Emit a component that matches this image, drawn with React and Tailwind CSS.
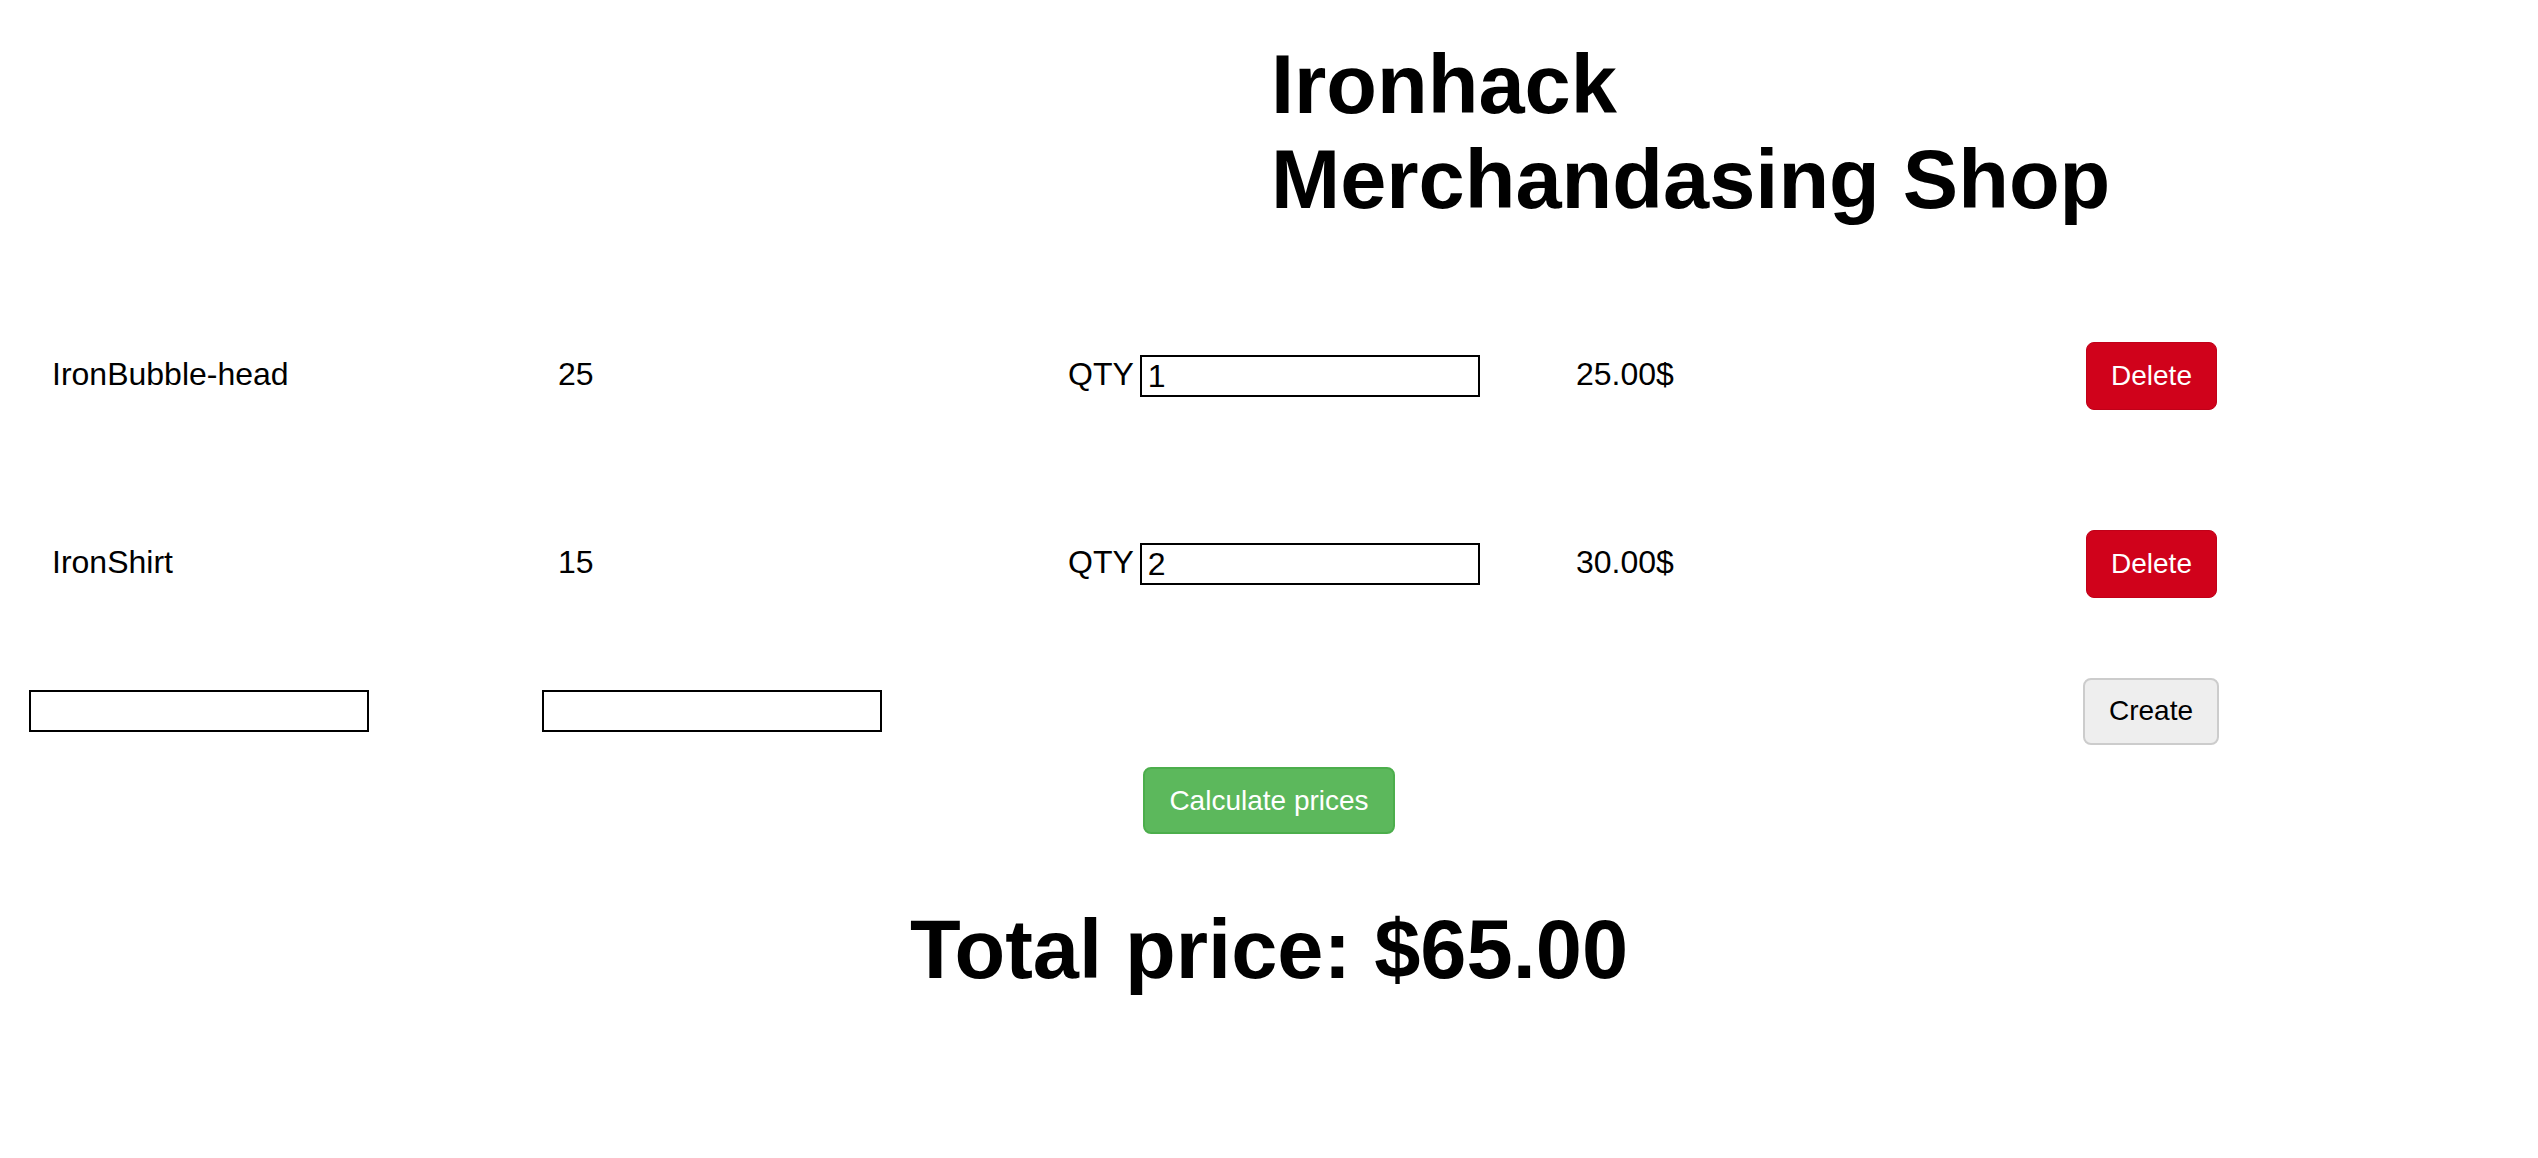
import React, { useState } from 'react';

const initialProducts = [
  { name: 'IronBubble-head', price: 25, qty: '1' },
  { name: 'IronShirt', price: 15, qty: '2' }
];

const App = () => {
  const [products, setProducts] = useState(initialProducts);
  const [newName, setNewName] = useState('');
  const [newPrice, setNewPrice] = useState('');
  const [total, setTotal] = useState(65);

  const updateQty = (index, value) => {
    setProducts(products.map((p, i) => (i === index ? { ...p, qty: value } : p)));
  };

  const remove = (index) => setProducts(products.filter((_, i) => i !== index));

  const create = () => {
    if (!newName) return;
    setProducts([...products, { name: newName, price: Number(newPrice) || 0, qty: '0' }]);
    setNewName('');
    setNewPrice('');
  };

  const calculate = () => {
    setTotal(products.reduce((sum, p) => sum + p.price * (Number(p.qty) || 0), 0));
  };

  return (
    <div className="min-h-screen bg-white text-black font-['Liberation_Sans',Arial,sans-serif]">
      <h1 className="pt-[37px] pl-[1271px] text-[83px] leading-[95px] font-bold">
        Ironhack
        <br />
        Merchandasing Shop
      </h1>

      {products.map((p, i) => (
        <div
          key={p.name + i}
          className={`${i === 0 ? 'mt-[115px]' : 'mt-[120px]'} grid h-[68px] grid-cols-[507px_510px_510px_508px_1fr] items-center text-[32px] leading-[40px]`}
        >
          <div className="pl-[52px] pb-[4px]">{p.name}</div>
          <div className="pl-[51px] pb-[4px]">{p.price}</div>
          <div className="flex items-center pl-[51px]">
            <span className="mr-[6px] pb-[4px]">QTY</span>
            <input
              value={p.qty}
              onChange={(e) => updateQty(i, e.target.value)}
              className="h-[42px] w-[340px] border-2 border-black px-[6px] text-[32px] outline-none"
            />
          </div>
          <div className="pl-[49px] pb-[4px]">{(p.price * (Number(p.qty) || 0)).toFixed(2)}$</div>
          <div className="pl-[51px]">
            <button
              onClick={() => remove(i)}
              className="h-[68px] w-[131px] rounded-[8px] border border-[#c00119] bg-[#d0021b] text-[28px] text-white"
            >
              Delete
            </button>
          </div>
        </div>
      ))}

      <div className="mt-[79px] grid h-[68px] grid-cols-[513px_1504px_1fr] items-center">
        <div className="pl-[29px]">
          <input
            value={newName}
            onChange={(e) => setNewName(e.target.value)}
            className="h-[42px] w-[340px] border-2 border-black px-[6px] text-[32px] outline-none"
          />
        </div>
        <div className="pl-[29px]">
          <input
            value={newPrice}
            onChange={(e) => setNewPrice(e.target.value)}
            className="h-[42px] w-[340px] border-2 border-black px-[6px] text-[32px] outline-none"
          />
        </div>
        <div className="pl-[66px]">
          <button
            onClick={create}
            className="h-[67px] w-[136px] rounded-[8px] border-2 border-[#cccccc] bg-[#eeeeee] text-[28px] text-black"
          >
            Create
          </button>
        </div>
      </div>

      <div className="mt-[22px] flex justify-center">
        <button
          onClick={calculate}
          className="h-[67px] w-[252px] rounded-[8px] border-2 border-[#4cae4c] bg-[#5cb85c] text-[28px] text-white"
        >
          Calculate prices
        </button>
      </div>

      <h2 className="mt-[69px] text-center text-[83px] leading-[93px] font-bold">
        Total price: ${total.toFixed(2)}
      </h2>
    </div>
  );
};

export default App;
